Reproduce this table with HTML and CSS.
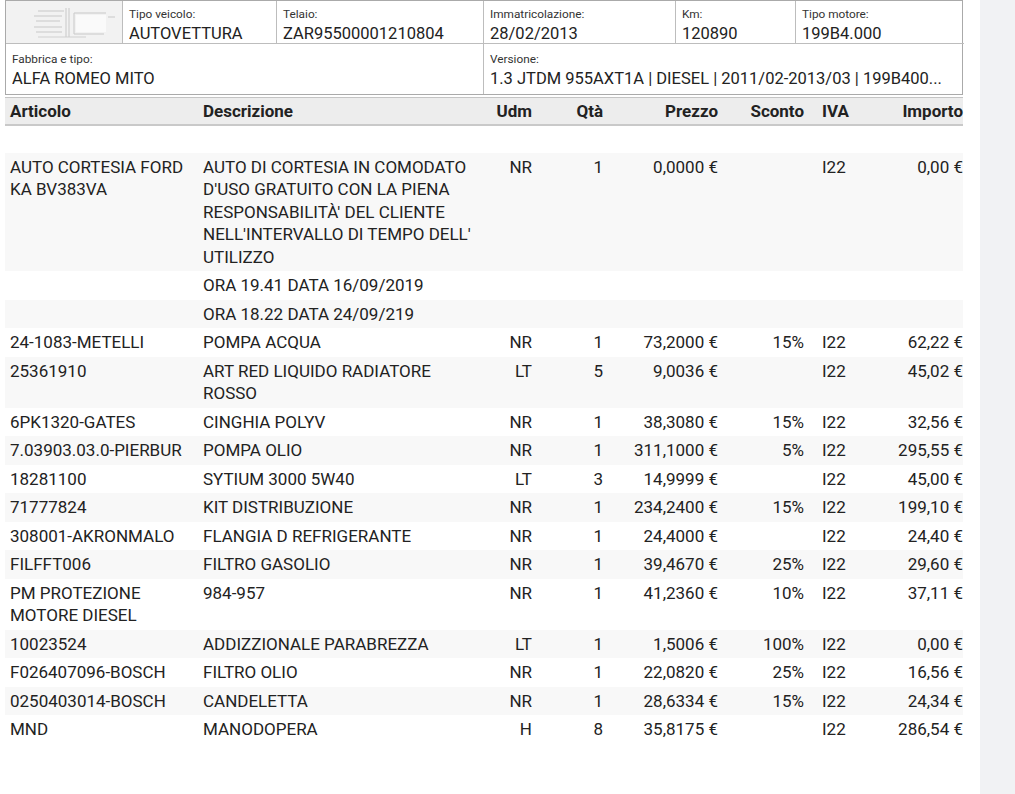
FILE: index.html
```html
<!DOCTYPE html>
<html lang="it">
<head>
<meta charset="utf-8">
<title>Preventivo</title>
<link rel="stylesheet" href="styles.css">
</head>
<body>
<div class="page">
  <main class="main">
    <div class="vehicle">
      <div class="cell logo">
        <svg width="100" height="38" viewBox="0 0 100 38">
          <g stroke="#cfcfcf" stroke-width="1.2" fill="none">
            <line x1="22" y1="8" x2="48" y2="8"/>
            <line x1="18" y1="13" x2="46" y2="13"/>
            <line x1="20" y1="18" x2="44" y2="18"/>
            <line x1="18" y1="24" x2="46" y2="24"/>
            <line x1="20" y1="29" x2="46" y2="29"/>
            <line x1="22" y1="34" x2="70" y2="34"/>
            <line x1="50" y1="5" x2="50" y2="34"/>
            <line x1="53" y1="5" x2="53" y2="34"/>
            <line x1="58" y1="10" x2="90" y2="10"/>
            <line x1="58" y1="10" x2="58" y2="31"/>
            <line x1="58" y1="31" x2="88" y2="31"/>
            <line x1="92" y1="14" x2="99" y2="14"/>
          </g>
          <rect x="60" y="12" width="30" height="17" fill="#fafafa"/>
        </svg>
      </div>
      <div class="cell"><div class="lbl">Tipo veicolo:</div><div class="val">AUTOVETTURA</div></div>
      <div class="cell"><div class="lbl">Telaio:</div><div class="val">ZAR95500001210804</div></div>
      <div class="cell"><div class="lbl">Immatricolazione:</div><div class="val">28/02/2013</div></div>
      <div class="cell"><div class="lbl">Km:</div><div class="val">120890</div></div>
      <div class="cell last"><div class="lbl">Tipo motore:</div><div class="val">199B4.000</div></div>
      <div class="cell wide row2"><div class="lbl">Fabbrica e tipo:</div><div class="val">ALFA ROMEO MITO</div></div>
      <div class="cell wide row2 last"><div class="lbl">Versione:</div><div class="val">1.3 JTDM 955AXT1A | DIESEL | 2011/02-2013/03 | 199B400...</div></div>
    </div>

    <table class="items">
      <colgroup>
        <col class="c-art"><col class="c-desc"><col class="c-udm"><col class="c-qta">
        <col class="c-prz"><col class="c-sc"><col class="c-iva"><col class="c-imp">
      </colgroup>
      <thead>
        <tr>
          <th class="l">Articolo</th><th class="l">Descrizione</th><th class="r">Udm</th><th class="r">Qtà</th>
          <th class="r">Prezzo</th><th class="r sc">Sconto</th><th class="l iva">IVA</th><th class="r imp">Importo</th>
        </tr>
      </thead>
      <tbody>
        <tr class="blank"><td></td><td></td><td></td><td></td><td></td><td></td><td></td><td></td></tr>
        <tr><td>AUTO CORTESIA FORD KA BV383VA</td><td>AUTO DI CORTESIA IN COMODATO D'USO GRATUITO CON LA PIENA RESPONSABILITÀ' DEL CLIENTE NELL'INTERVALLO DI TEMPO DELL' UTILIZZO</td><td class="r">NR</td><td class="r">1</td><td class="r">0,0000 €</td><td class="r sc"></td><td class="iva">I22</td><td class="r imp">0,00 €</td></tr>
        <tr><td></td><td>ORA 19.41 DATA 16/09/2019</td><td></td><td></td><td></td><td class="sc"></td><td class="iva"></td><td class="imp"></td></tr>
        <tr><td></td><td>ORA 18.22 DATA 24/09/219</td><td></td><td></td><td></td><td class="sc"></td><td class="iva"></td><td class="imp"></td></tr>
        <tr><td>24-1083-METELLI</td><td>POMPA ACQUA</td><td class="r">NR</td><td class="r">1</td><td class="r">73,2000 €</td><td class="r sc">15%</td><td class="iva">I22</td><td class="r imp">62,22 €</td></tr>
        <tr><td>25361910</td><td>ART RED LIQUIDO RADIATORE ROSSO</td><td class="r">LT</td><td class="r">5</td><td class="r">9,0036 €</td><td class="r sc"></td><td class="iva">I22</td><td class="r imp">45,02 €</td></tr>
        <tr><td>6PK1320-GATES</td><td>CINGHIA POLYV</td><td class="r">NR</td><td class="r">1</td><td class="r">38,3080 €</td><td class="r sc">15%</td><td class="iva">I22</td><td class="r imp">32,56 €</td></tr>
        <tr><td>7.03903.03.0-PIERBUR</td><td>POMPA OLIO</td><td class="r">NR</td><td class="r">1</td><td class="r">311,1000 €</td><td class="r sc">5%</td><td class="iva">I22</td><td class="r imp">295,55 €</td></tr>
        <tr><td>18281100</td><td>SYTIUM 3000 5W40</td><td class="r">LT</td><td class="r">3</td><td class="r">14,9999 €</td><td class="r sc"></td><td class="iva">I22</td><td class="r imp">45,00 €</td></tr>
        <tr><td>71777824</td><td>KIT DISTRIBUZIONE</td><td class="r">NR</td><td class="r">1</td><td class="r">234,2400 €</td><td class="r sc">15%</td><td class="iva">I22</td><td class="r imp">199,10 €</td></tr>
        <tr><td>308001-AKRONMALO</td><td>FLANGIA D REFRIGERANTE</td><td class="r">NR</td><td class="r">1</td><td class="r">24,4000 €</td><td class="r sc"></td><td class="iva">I22</td><td class="r imp">24,40 €</td></tr>
        <tr><td>FILFFT006</td><td>FILTRO GASOLIO</td><td class="r">NR</td><td class="r">1</td><td class="r">39,4670 €</td><td class="r sc">25%</td><td class="iva">I22</td><td class="r imp">29,60 €</td></tr>
        <tr><td>PM PROTEZIONE MOTORE DIESEL</td><td>984-957</td><td class="r">NR</td><td class="r">1</td><td class="r">41,2360 €</td><td class="r sc">10%</td><td class="iva">I22</td><td class="r imp">37,11 €</td></tr>
        <tr><td>10023524</td><td>ADDIZZIONALE PARABREZZA</td><td class="r">LT</td><td class="r">1</td><td class="r">1,5006 €</td><td class="r sc">100%</td><td class="iva">I22</td><td class="r imp">0,00 €</td></tr>
        <tr><td>F026407096-BOSCH</td><td>FILTRO OLIO</td><td class="r">NR</td><td class="r">1</td><td class="r">22,0820 €</td><td class="r sc">25%</td><td class="iva">I22</td><td class="r imp">16,56 €</td></tr>
        <tr><td>0250403014-BOSCH</td><td>CANDELETTA</td><td class="r">NR</td><td class="r">1</td><td class="r">28,6334 €</td><td class="r sc">15%</td><td class="iva">I22</td><td class="r imp">24,34 €</td></tr>
        <tr><td>MND</td><td>MANODOPERA</td><td class="r">H</td><td class="r">8</td><td class="r">35,8175 €</td><td class="r sc"></td><td class="iva">I22</td><td class="r imp">286,54 €</td></tr>
      </tbody>
    </table>
  </main>
  <aside class="side"></aside>
</div>
</body>
</html>
```

FILE: styles.css
```css
* { box-sizing: border-box; }
html, body { margin: 0; padding: 0; background: #fff; }
body {
  font-family: Roboto, "Liberation Sans", Arial, sans-serif;
  color: #222;
}
.page {
  display: flex;
  width: 1015px;
  min-height: 794px;
}
.main {
  width: 980px;
  padding: 0 17px 0 5px;
  background: #fff;
}
.side {
  flex: 1;
  background: #f1f2f4;
}

/* vehicle info box */
.vehicle {
  display: grid;
  grid-template-columns: 117px 154px 207px 192px 120px 168px;
  grid-template-rows: 43px 50px;
  border: 1px solid #aaa;
}
.cell {
  border-right: 1px solid #bdbdbd;
  border-bottom: 1px solid #bdbdbd;
  padding: 6px 6px 0 6px;
  overflow: hidden;
}
.cell.last { border-right: none; }
.cell.row2 { border-bottom: none; padding-top: 8px; }
.cell.wide { grid-column: span 3; }
.logo {
  background: #f2f2f2;
  padding: 2px 0 0 10px;
}
.lbl {
  font-size: 11.8px;
  line-height: 14px;
  color: #333;
}
.val {
  margin-top: 3px;
  font-size: 16.5px;
  line-height: 20px;
  color: #222;
  white-space: nowrap;
  overflow: hidden;
}

/* items table */
.items {
  width: 958px;
  table-layout: fixed;
  border-collapse: collapse;
  margin-top: 2px;
  font-size: 17px;
  line-height: 22.5px;
}
.c-art { width: 193px; }
.c-desc { width: 289px; }
.c-udm { width: 50px; }
.c-qta { width: 71px; }
.c-prz { width: 115px; }
.c-sc { width: 89px; }
.c-iva { width: 70px; }
.c-imp { width: 81px; }

.items thead tr {
  background: #ededed;
  border-top: 1px solid #c4c4c4;
  border-bottom: 2px solid #c9c9c9;
}
.items th {
  font-weight: 700;
  padding: 2px 5px 1px 5px;
  height: 27px;
  color: #222;
}
.items td {
  padding: 3px 5px;
  vertical-align: top;
  color: #222;
}
.items tr.blank td { height: 28px; }
.items tbody tr:nth-child(even) { background: #f8f8f8; }
.l { text-align: left; }
.r { text-align: right; }
.items .sc { padding-right: 8px; }
.items .iva { padding-left: 10px; }
.items .imp { padding-right: 0; }
```
